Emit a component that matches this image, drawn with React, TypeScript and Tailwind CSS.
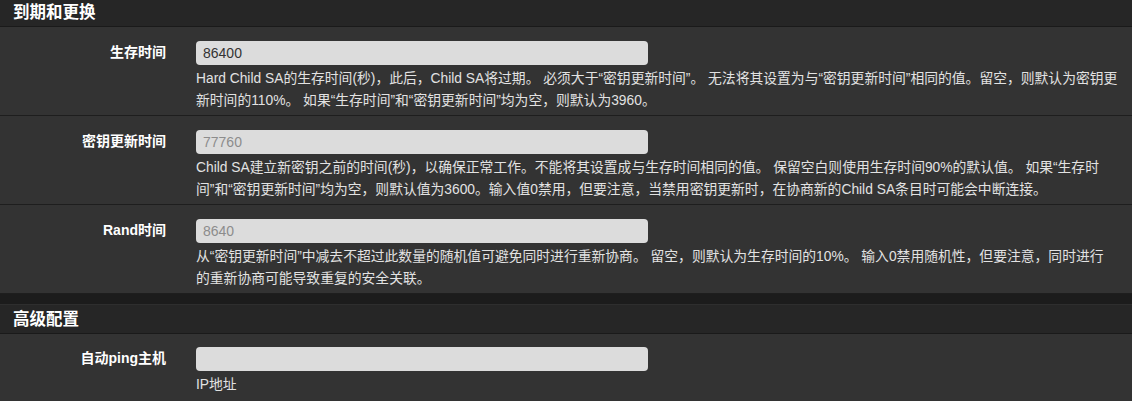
import React from 'react';

const font = { fontFamily: '"Liberation Sans", "Noto Sans CJK SC", sans-serif' };

interface FieldProps {
  label: string;
  value?: string;
  placeholder?: string;
  help: string[];
}

const SectionHeader = ({ title, first }: { title: string; first?: boolean }) => (
  <div
    className={`flex items-center bg-[#262626] border-b border-[#1a1a1a] px-[13px] text-[16.5px] font-bold text-white ${
      first ? 'h-[27px] pb-[2px]' : 'h-[30px] border-t border-t-[#2e2e2e]'
    }`}
  >
    {title}
  </div>
);

const Field = ({ label, value, placeholder, help }: FieldProps) => (
  <div className="flex bg-[#333333] border-b border-[#1e1e1e] pt-[14px] pb-[3px]">
    <div className="w-[166px] shrink-0 text-right text-[14px] font-bold leading-5 text-white pt-[1px]">
      {label}
    </div>
    <div className="ml-[30px] flex-1">
      <input
        className="block h-[24px] w-[452px] rounded-[4px] bg-[#dcdcdc] px-[7px] text-[14px] text-[#333] placeholder:text-[#8c8c8c] outline-none"
        defaultValue={value}
        placeholder={placeholder}
        style={font}
      />
      <div className="mt-[3px] text-[13.8px] leading-[22px] text-[#e2e2e2]">
        {help.map((line, i) => (
          <div key={i} className="whitespace-nowrap">
            {line}
          </div>
        ))}
      </div>
    </div>
  </div>
);

export default function App() {
  return (
    <div className="w-[1132px] h-[401px] overflow-hidden bg-[#333333]" style={font}>
      <SectionHeader title="到期和更换" first />
      <Field
        label="生存时间"
        value="86400"
        help={[
          'Hard Child SA的生存时间(秒)，此后，Child SA将过期。 必须大于“密钥更新时间”。 无法将其设置为与“密钥更新时间”相同的值。留空，则默认为密钥更',
          '新时间的110%。 如果“生存时间”和“密钥更新时间”均为空，则默认为3960。',
        ]}
      />
      <Field
        label="密钥更新时间"
        placeholder="77760"
        help={[
          'Child SA建立新密钥之前的时间(秒)，以确保正常工作。不能将其设置成与生存时间相同的值。 保留空白则使用生存时间90%的默认值。 如果“生存时',
          '间”和“密钥更新时间”均为空，则默认值为3600。输入值0禁用，但要注意，当禁用密钥更新时，在协商新的Child SA条目时可能会中断连接。',
        ]}
      />
      <Field
        label="Rand时间"
        placeholder="8640"
        help={[
          '从“密钥更新时间”中减去不超过此数量的随机值可避免同时进行重新协商。 留空，则默认为生存时间的10%。 输入0禁用随机性，但要注意，同时进行',
          '的重新协商可能导致重复的安全关联。',
        ]}
      />
      <div className="h-[10px] bg-[#1c1c1c]" />
      <SectionHeader title="高级配置" />
      <div className="flex bg-[#333333] pt-[13px]">
        <div className="w-[166px] shrink-0 text-right text-[14px] font-bold leading-5 text-white pt-[1px]">
          自动ping主机
        </div>
        <div className="ml-[30px] flex-1">
          <input
            className="block h-[24px] w-[452px] rounded-[4px] bg-[#dcdcdc] px-[7px] text-[14px] text-[#333] outline-none"
            style={font}
          />
          <div className="mt-[3px] text-[13.8px] leading-[22px] text-[#e2e2e2]">IP地址</div>
        </div>
      </div>
    </div>
  );
}
